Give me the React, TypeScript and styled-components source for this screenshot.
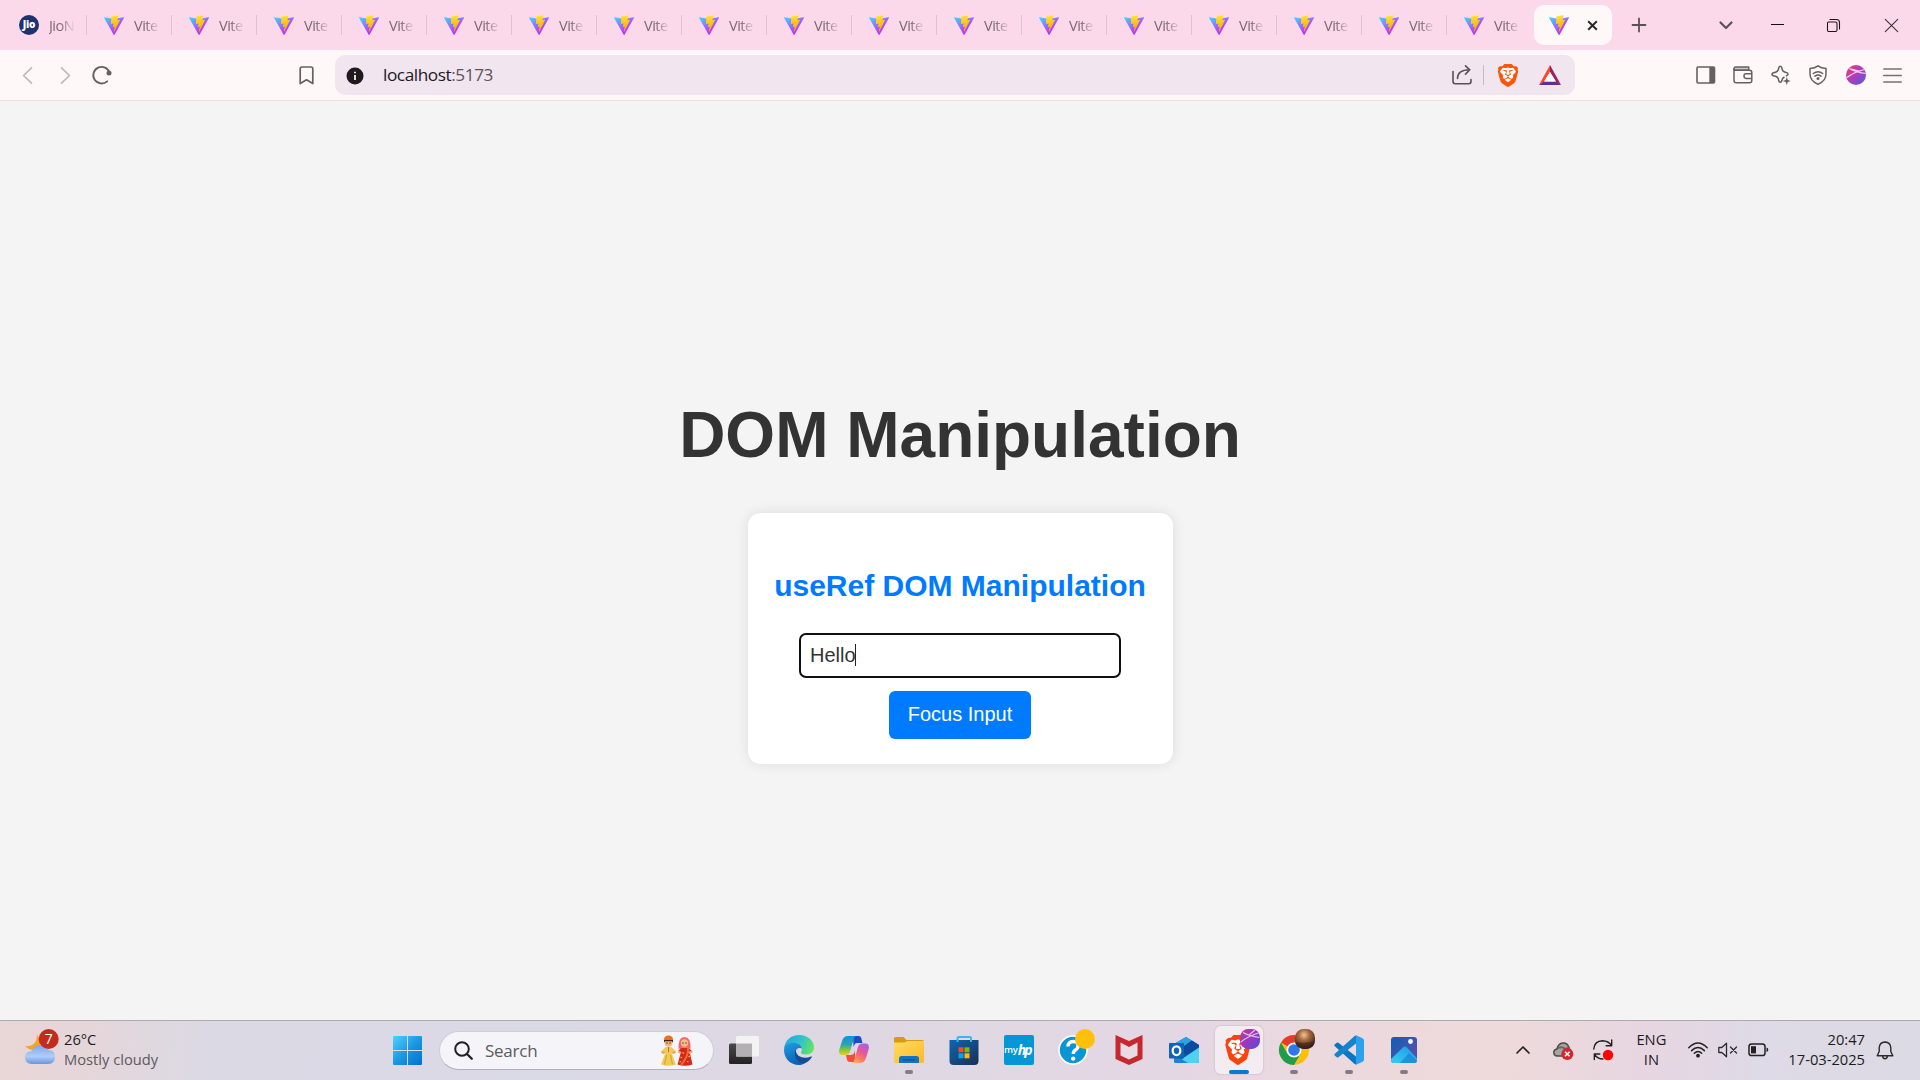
import React from "react";
import styled, { createGlobalStyle, css } from "styled-components";
import { SiBrave } from "react-icons/si";

const UI_FONT = '"Open Sans", "Noto Sans", sans-serif';
const PAGE_FONT = '"Liberation Sans", Arial, sans-serif';

const GlobalStyle = createGlobalStyle`
  * { box-sizing: border-box; }
  body { margin: 0; background: #f4f4f4; overflow: hidden; }
  svg { display: block; flex: none; overflow: visible; }
`;

const Screen = styled.div`
  width: 1920px;
  height: 1080px;
  display: flex;
  flex-direction: column;
  font-family: ${UI_FONT};
`;

/* ---------- Tab strip ---------- */

const TabStrip = styled.div`
  height: 50px;
  flex: none;
  display: flex;
  align-items: center;
  background: #fbd9ea;
  padding-left: 2px;
`;

const Tab = styled.div<{ $divider?: boolean }>`
  width: 85px;
  height: 20px;
  flex: none;
  display: flex;
  align-items: center;
  padding-left: 17px;
  border-right: 1px solid ${(p) => (p.$divider ? "#dcc3d1" : "transparent")};
`;

const TabTitle = styled.span`
  width: 25px;
  margin-left: 10px;
  white-space: nowrap;
  font-size: 14.6px;
  line-height: 20px;
  letter-spacing: -0.55px;
  color: #7b6974;
  -webkit-mask-image: linear-gradient(90deg, #000 45%, transparent 105%);
  mask-image: linear-gradient(90deg, #000 45%, transparent 105%);
`;

const ActiveTab = styled.div`
  width: 78px;
  height: 40px;
  margin-left: 2px;
  padding: 0 14px 0 15px;
  display: flex;
  align-items: center;
  justify-content: space-between;
  border-radius: 10px;
  background: #fff8f8;
`;

const StripButton = styled.div<{ $gap: number }>`
  margin-left: ${(p) => p.$gap}px;
`;

/* ---------- Toolbar ---------- */

const Toolbar = styled.div`
  height: 51px;
  flex: none;
  display: flex;
  align-items: center;
  background: #fff8f8;
  border-bottom: 1px solid #f2dce3;
`;

const NavButtons = styled.div`
  width: 335px;
  display: flex;
  align-items: center;
  padding-left: 22px;
`;

const NavButton = styled.div<{ $gap: number }>`
  margin-left: ${(p) => p.$gap}px;
`;

const BookmarkSlot = styled.div`
  margin-left: auto;
  padding-right: 21px;
`;

const AddressBar = styled.div`
  width: 1240px;
  height: 40px;
  display: flex;
  align-items: center;
  padding: 0 14px 0 11px;
  border-radius: 10px;
  background: #f1e5ef;
`;

const SiteInfo = styled.div`
  margin-top: 2px;
`;

const Url = styled.span`
  margin-left: 19px;
  flex: 1;
  font-size: 17.2px;
  line-height: 24px;
  letter-spacing: -0.42px;
  color: #201a1d;
  em { font-style: normal; color: #5d5259; }
`;

const AddressDivider = styled.span`
  width: 1px;
  height: 20px;
  margin: 0 14px 0 11px;
  background: #c5bcc8;
`;

const RewardsSlot = styled.div`
  margin-left: 21px;
`;

const Extensions = styled.div`
  display: flex;
  align-items: center;
  gap: 17.4px;
  margin-left: auto;
  padding-right: 18px;
`;

/* ---------- Page ---------- */

const Page = styled.main`
  flex: 1;
  display: flex;
  flex-direction: column;
  align-items: center;
  padding-top: 297px;
  background: #f4f4f4;
  font-family: ${PAGE_FONT};
`;

const Title = styled.h1`
  margin: 0 0 41px;
  font-size: 64px;
  line-height: 74px;
  color: #333;
`;

const Card = styled.section`
  width: 425px;
  height: 251px;
  display: flex;
  flex-direction: column;
  align-items: center;
  padding-top: 56px;
  border-radius: 12.5px;
  background: #fff;
  box-shadow: 0 0 13px rgba(0, 0, 0, 0.1);
`;

const CardTitle = styled.h2`
  margin: 0 0 30px;
  font-size: 30px;
  line-height: 34px;
  white-space: nowrap;
  color: #007bff;
`;

const Field = styled.div`
  width: 322px;
  height: 45px;
  display: flex;
  align-items: center;
  padding: 0 0 1px 9px;
  border: 2px solid #101010;
  border-radius: 7px;
  font-size: 20px;
  color: #333;
`;

const Caret = styled.span`
  width: 1px;
  height: 22px;
  margin-left: -1px;
  background: #222;
`;

const FocusButton = styled.button`
  width: 142px;
  height: 48px;
  margin-top: 13px;
  padding: 0 0 2px;
  border: 0;
  border-radius: 6px;
  background: #007bff;
  color: #fff;
  font: 20px ${PAGE_FONT};
`;

/* ---------- Taskbar ---------- */

const Taskbar = styled.footer`
  height: 60px;
  flex: none;
  display: flex;
  align-items: center;
  padding-bottom: 1px;
  border-top: 1px solid #aeabae;
  background: linear-gradient(
    95deg,
    #e9d6d6 0, #e5d6da 90px, #dbd9e4 210px, #dad9e6 560px, #ddd8e3 720px, #e0d8e3 980px,
    #e4d7e4 1180px, #ecd9de 1320px, #eedada 1500px, #e7d6e1 1640px, #dedae7 1760px, #dcdae3 1920px
  );
`;

const Weather = styled.div`
  width: 393px;
  display: flex;
  align-items: center;
  padding-left: 24px;
`;

const WeatherArt = styled.div`
  padding-bottom: 3px;
`;

const Lines = styled.div<{ $align?: string }>`
  display: flex;
  flex-direction: column;
  padding-bottom: 3px;
  text-align: ${(p) => p.$align ?? "left"};
  white-space: nowrap;
  font-size: 14.7px;
  line-height: 20px;
  color: #1c1c1e;
`;

const Muted = styled.span`
  color: #5d5960;
`;

const WeatherText = styled(Lines)`
  margin-left: 8px;
`;

const SearchBox = styled.div`
  width: 275px;
  height: 39px;
  margin: 0 2px 0 17px;
  display: flex;
  align-items: center;
  padding: 0 20px 0 14px;
  border: 1px solid #cfccd8;
  border-bottom-color: #b3b0bc;
  border-radius: 20px;
  background: #f5f4f9;
  font-size: 17px;
  letter-spacing: -0.25px;
  color: #5c5b60;
`;

const SearchLabel = styled.span`
  flex: 1;
  margin-left: 12px;
`;

const AppSlot = styled.div`
  width: 55px;
  height: 48px;
  display: flex;
  justify-content: center;
`;

const AppTile = styled.div<{ $active?: boolean; $running?: boolean }>`
  width: 48px;
  height: 48px;
  display: flex;
  flex-direction: column;
  align-items: center;
  padding-top: 9px;
  border-radius: 6px;
  ${(p) =>
    p.$active &&
    css`
      background: #f3edf2;
      box-shadow: 0 0 1px 1px rgba(180, 160, 175, 0.25);
    `}
  &::after {
    content: "";
    display: ${(p) => (p.$running || p.$active ? "block" : "none")};
    width: ${(p) => (p.$active ? 20 : 8)}px;
    height: 4px;
    margin-top: 5px;
    border-radius: 2px;
    background: ${(p) => (p.$active ? "#0a78d4" : "#857b82")};
  }
`;

const Tray = styled.div`
  margin-left: auto;
  display: flex;
  align-items: center;
  padding-right: 26px;
`;

const TraySlot = styled.div<{ $gap: number }>`
  margin-left: ${(p) => p.$gap}px;
`;

/* ---------- Icons ---------- */

const line = (color: string, w = 1.6) => ({
  fill: "none",
  stroke: color,
  strokeWidth: w,
  strokeLinecap: "round" as const,
  strokeLinejoin: "round" as const,
});

const GradientDefs = styled.svg`
  position: absolute;
`;

const SharedGradients = () => (
  <GradientDefs width="0" height="0">
    <defs>
      <linearGradient id="viteBody" x1="-.8%" x2="57.6%" y1="7.6%" y2="78.4%">
        <stop offset="0" stopColor="#41D1FF" /><stop offset="1" stopColor="#BD34FE" />
      </linearGradient>
      <linearGradient id="viteBolt" x1="43.4%" x2="50.3%" y1="2.2%" y2="89%">
        <stop offset="0" stopColor="#FFEA83" /><stop offset=".083" stopColor="#FFDD35" /><stop offset="1" stopColor="#FFA800" />
      </linearGradient>
      <linearGradient id="orb" x1="0" y1="0" x2="1" y2="1">
        <stop offset="0" stopColor="#f0416b" /><stop offset=".45" stopColor="#b63bb5" /><stop offset="1" stopColor="#4e5be6" />
      </linearGradient>
    </defs>
  </GradientDefs>
);

const ViteLogo = () => (
  <svg width="20" height="20" viewBox="0 0 256 257">
    <path fill="url(#viteBody)" d="M255.153 37.938L134.897 252.976c-2.483 4.44-8.862 4.466-11.382.048L.875 37.958c-2.746-4.814 1.371-10.646 6.827-9.67l120.385 21.517a6.537 6.537 0 0 0 2.322-.004l117.867-21.483c5.438-.991 9.574 4.796 6.877 9.62Z" />
    <path fill="url(#viteBolt)" d="M185.432.063L96.44 17.501a3.268 3.268 0 0 0-2.634 3.014l-5.474 92.456a3.268 3.268 0 0 0 3.997 3.378l24.777-5.718c2.318-.535 4.413 1.507 3.936 3.838l-7.361 36.047c-.495 2.426 1.782 4.5 4.151 3.78l15.304-4.649c2.372-.72 4.652 1.36 4.15 3.788l-11.698 56.621c-.732 3.542 3.979 5.473 5.943 2.437l1.313-2.028l72.516-144.72c1.215-2.423-.88-5.186-3.54-4.672l-25.505 4.922c-2.396.462-4.435-1.77-3.759-4.114l16.646-57.705c.677-2.35-1.37-4.583-3.769-4.113Z" />
  </svg>
);

const JioBadge = styled.span`
  width: 20px;
  height: 20px;
  flex: none;
  border-radius: 50%;
  background: #21306f;
  color: #fff;
  font: 800 10px/19px "Open Sans", sans-serif;
  letter-spacing: -0.2px;
  text-align: center;
`;

const Orb = ({ size }: { size: number }) => (
  <svg width={size} height={size} viewBox="0 0 20 20">
    <circle cx="10" cy="10" r="10" fill="url(#orb)" />
    <path d="M1 12.500Q8 7 18.500 4.500M3.500 3.500Q9 7 19.500 8.500M5 4L13 6" fill="none" stroke="#fbd3ee" strokeWidth="1.200" />
  </svg>
);

const BraveLogo = ({ w, h, color }: { w: number; h: number; color: string }) => (
  <svg width={w} height={h} viewBox="2 0 20 24" preserveAspectRatio="none">
    <path d="M6 4h12l2 4-3 10-5 4-5-4L4 8Z" fill="#fff" />
    <SiBrave x={0} y={0} size={24} color={color} />
  </svg>
);

const EdgeIcon = () => (
  <svg width="30" height="30" viewBox="0 0 30 30">
    <defs>
      <linearGradient id="edgeTop" x1="0" y1=".3" x2="1" y2=".6">
        <stop offset="0" stopColor="#2aa5e0" /><stop offset=".5" stopColor="#2fc2cf" /><stop offset="1" stopColor="#66e35c" />
      </linearGradient>
      <linearGradient id="edgeMid" x1="0" y1="0" x2=".4" y2="1">
        <stop offset="0" stopColor="#1fa0e0" /><stop offset="1" stopColor="#0a5fb8" />
      </linearGradient>
    </defs>
    <path d="M0 14C1 5 7 0 15 0c9 0 15 6 15 12.5 0 4-3 7-7.500 7-4 0-5.500-1-5.500-2.300 0-.8 1-1 1-3.200C18 10.500 14 8 10 8 5 8 1 11 0 14Z" fill="url(#edgeTop)" />
    <path d="M0 15C0 10 4.500 7.800 9.500 7.800c4.500 0 8.500 2.700 8.500 6.200-1-1.500-6-2-6.500 3C11.500 23 16 27.500 21 28 19 29.400 17 30 15 30 6.500 30 0 23.500 0 15Z" fill="url(#edgeMid)" />
    <path d="M11.800 14.500C9 19 12 28.500 20.500 28.300c3.300-1.300 5.800-3.600 7.300-6.100.3-.6-.2-1-.8-.7C20.500 24.500 11.500 22 11.800 14.500Z" fill="#124c94" />
  </svg>
);

const CopilotIcon = () => (
  <svg width="30" height="30" viewBox="0 0 30 30">
    <defs>
      <linearGradient id="copA" x1=".2" y1="0" x2=".2" y2="1">
        <stop offset="0" stopColor="#128fe8" /><stop offset=".45" stopColor="#2ba6a8" /><stop offset=".75" stopColor="#8dc63c" /><stop offset="1" stopColor="#f2cd1c" />
      </linearGradient>
      <linearGradient id="copB" x1=".8" y1="0" x2=".3" y2="1">
        <stop offset="0" stopColor="#a563e6" /><stop offset=".4" stopColor="#e5559c" /><stop offset=".75" stopColor="#fa7a62" /><stop offset="1" stopColor="#ffad5c" />
      </linearGradient>
    </defs>
    <path d="M14 1h5.500c1.500 0 2.300.8 2.800 2.300L23.500 8H18c-2 0-2.500 1.500-3.500 4Z" fill="#1a4fc4" />
    <path d="M16 27H11c-1.800 0-2.700-1-3.200-2.800L7 20h5c2 0 3-1.500 4-4Z" fill="#f04f3a" />
    <path d="M9 1h9c-2 0-2.700 1-3.300 3l-3.500 12c-.8 2.500-2 4-5 4H3.500C.5 20-.5 17.500.3 14.500L3 6C4.200 2.500 6 1 9 1Z" fill="url(#copA)" />
    <path d="M21 28H12c2 0 2.700-1 3.300-3l3.500-12.500c.8-2.500 2-4 5-4h2.700c3 0 4 2.500 3.200 5.500L27 23c-1.200 3.500-3 5-6 5Z" fill="url(#copB)" />
  </svg>
);

const FolderIcon = () => (
  <svg width="30" height="30" viewBox="0 0 30 30">
    <defs>
      <linearGradient id="fold" x1="0" y1="0" x2="1" y2="1"><stop offset="0" stopColor="#ffdc65" /><stop offset="1" stopColor="#fbb825" /></linearGradient>
    </defs>
    <path d="M0 3.500Q0 2 1.500 2H9.500l3 3H28.500Q30 5 30 6.500V10H0Z" fill="#d99a10" />
    <path d="M0 7.500H10.500L13 6H30V26.500Q30 28 28.500 28H1.500Q0 28 0 26.500Z" fill="url(#fold)" />
    <path d="M5 28V23.500Q5 21 7.500 21h15q2.500 0 2.500 2.500V28Z" fill="#1273c4" />
    <path d="M9 25h12" stroke="#0c4d92" strokeWidth="1.200" />
  </svg>
);

const StoreIcon = () => (
  <svg width="30" height="30" viewBox="0 0 30 30">
    <defs>
      <linearGradient id="store" x1="0" y1="0" x2="1" y2="1"><stop offset="0" stopColor="#0e66b3" /><stop offset="1" stopColor="#1a2e52" /></linearGradient>
    </defs>
    <path d="M.5 5h29V26q0 4-4 4h-21q-4 0-4-4Z" fill="url(#store)" />
    <path d="M8.500 7V3.500Q8.500 2 10 2H20.500Q22 2 22 3.500V7" fill="none" stroke="#3cb6ea" strokeWidth="2" />
    <path d="M9.500 12.300h5v5h-5Z" fill="#f25022" /><path d="M15.500 12.300h5v5h-5Z" fill="#7fba00" />
    <path d="M9.500 18.300h5v5h-5Z" fill="#00a4ef" /><path d="M15.500 18.300h5v5h-5Z" fill="#ffb900" />
  </svg>
);

const MyHp = styled.span`
  width: 30px;
  height: 30px;
  flex: none;
  display: flex;
  align-items: center;
  justify-content: center;
  border-radius: 2px;
  background: #0497d8;
  color: #fff;
  font: 600 9.5px/30px "Open Sans", sans-serif;
  letter-spacing: -0.3px;
  i { font: italic 700 14px/28px "Liberation Sans Narrow", "Open Sans", sans-serif; letter-spacing: -1.8px; padding-right: 2px; }
`;

const HelpIcon = () => (
  <svg width="30" height="30" viewBox="0 0 30 30">
    <circle cx="14" cy="15" r="14" fill="#0a96d5" stroke="#fff" strokeWidth="1.600" />
    <path d="M9 11.500Q9 6.500 14.300 6.500T19 11Q19 13.500 16.500 15 14.300 16.400 14.300 19" fill="none" stroke="#fff" strokeWidth="3.400" />
    <circle cx="14.200" cy="23.600" r="2.200" fill="#fff" />
    <circle cx="26" cy="4" r="10" fill="#ffc00c" />
  </svg>
);

const McAfeeIcon = () => (
  <svg width="30" height="30" viewBox="0 0 30 30">
    <path d="M1.500 0L15 6 28.500 0V24L15 30 1.500 24Z" fill="#c5282d" />
    <path d="M6.500 7.500L15 12l8.500-4.500V20.500L15 24.500l-8.500-4Z" fill="#e8dbe4" />
  </svg>
);

const OutlookIcon = () => (
  <svg width="30" height="30" viewBox="0 0 30 30">
    <path d="M5 9L17 2l13 8V26q0 2-2 2H7q-2 0-2-2Z" fill="#0d58a8" />
    <path d="M5 9L17 2l6 3.500L11 14H5Z" fill="#2ba4e6" />
    <path d="M23 5.500L30 10v3L17 20l-6-6Z" fill="#0b4b9e" />
    <path d="M30 12.500V26q0 2-2 2H7Z" fill="#4cd3f4" />
    <path d="M5 22v4q0 2 2 2h12L9 22Z" fill="#1d83d4" />
    <rect x="0" y="8" width="15" height="15.500" rx="1" fill="#0f63b8" />
    <ellipse cx="7.500" cy="15.700" rx="3.800" ry="4.400" fill="none" stroke="#fff" strokeWidth="2.300" />
  </svg>
);

const BraveTask = () => (
  <svg width="30" height="30" viewBox="0 0 30 30">
    <path d="M7 5h13l4 5-3 13-7 6-8-6L3 10Z" fill="#fff" />
    <SiBrave x={-1} y={0} size={30} color="#fb4310" />
    <g transform="translate(16 -6)">
      <rect width="20" height="20" rx="8.500" fill="url(#orb)" />
      <rect width="20" height="20" rx="8.500" fill="#6c35c8" opacity=".35" />
      <path d="M1 13Q8 7 18.500 4M3 3.500Q9 7 19.500 8.500M9 6L15 1" fill="none" stroke="#e6bdf0" strokeWidth="1.200" />
    </g>
  </svg>
);

const ChromeIcon = () => (
  <svg width="30" height="30" viewBox="0 0 30 30">
    <defs>
      <radialGradient id="photo" cx=".45" cy=".3" r=".8"><stop offset="0" stopColor="#f2c49a" /><stop offset=".35" stopColor="#a5683c" /><stop offset="1" stopColor="#1c1210" /></radialGradient>
    </defs>
    <circle cx="15" cy="15" r="15" fill="#fbbf12" />
    <path d="M15 15L2 7.500A15 15 0 0 1 28 7.500H15Z" fill="#e33b2e" />
    <path d="M2 7.500A15 15 0 0 0 15 30L21.500 18.800 15 15 8.500 18.800Z" fill="#1f9d4c" />
    <circle cx="15" cy="15" r="7.500" fill="#fff" />
    <circle cx="15" cy="15" r="5.800" fill="#2f78e8" />
    <rect x="16" y="-6" width="20" height="20" rx="8.500" fill="url(#photo)" />
    <path d="M16.500 7Q26 9 35.500 6v2q-2 6-9 6t-10-6Z" fill="#2d1a15" opacity=".5" />
  </svg>
);

const VsCodeIcon = () => (
  <svg width="30" height="30" viewBox="0 0 30 30">
    <path d="M.600 9.500L2.800 7.700q.8-.6 1.600 0L22 21.500V29.500Q21 29.600 20.300 28.800L.600 11Q-.2 10.300.600 9.500Z" fill="#0878c0" />
    <path d="M.600 20.500L2.800 22.300q.8.600 1.600 0L22 8.500V.500Q21 .400 20.300 1.200L.600 19Q-.2 19.700.600 20.500Z" fill="#1684cc" />
    <path d="M22 .300L28.500 3.200Q30 4 30 5.500V24.500Q30 26 28.500 26.800L22 29.700Z" fill="#2ba1ef" />
  </svg>
);

const PhotosIcon = () => (
  <svg width="30" height="30" viewBox="0 0 30 30">
    <defs>
      <linearGradient id="phBg" x1="0" y1="0" x2="1" y2="1"><stop offset="0" stopColor="#0d5fb5" /><stop offset="1" stopColor="#6a4bab" /></linearGradient>
      <linearGradient id="phHill" x1="0" y1="1" x2="1" y2="0"><stop offset="0" stopColor="#3bd3f7" /><stop offset="1" stopColor="#1b93e3" /></linearGradient>
      <clipPath id="phClip"><rect x="2" y="2" width="26" height="26" rx="3" /></clipPath>
    </defs>
    <g clipPath="url(#phClip)">
      <rect x="2" y="2" width="26" height="26" fill="url(#phBg)" />
      <path d="M0 26L14 12.500q2-2 4 0L32 28v2H0Z" fill="url(#phHill)" />
      <path d="M9 30L20 18 32 30Z" fill="#1579cf" opacity=".6" />
    </g>
    <circle cx="21.500" cy="6.500" r="2.400" fill="#fff" />
  </svg>
);

const TaskViewIcon = () => (
  <svg width="30" height="30" viewBox="0 0 30 30">
    <defs>
      <linearGradient id="tvDark" x1="0" y1="0" x2="0" y2="1"><stop offset="0" stopColor="#4a4a4a" /><stop offset="1" stopColor="#222" /></linearGradient>
    </defs>
    <rect x="0" y="8.500" width="23" height="20.500" rx="1.500" fill="url(#tvDark)" />
    <rect x="7" y="1" width="23" height="20.500" rx="1.500" fill="#f4f3f4" />
    <rect x="7" y="8.500" width="16" height="13" fill="#b3b1b3" />
  </svg>
);

const CoupleArt = () => (
  <svg width="32" height="31" viewBox="0 0 32 31">
    <path d="M4 12.500Q7.500 10.500 11 12.500l4 4-2.500 2.500-2-1 4.500 11.500q-7.500 2.500-15 0L4.500 18 2.500 19 0 16.500Z" fill="#f0ca55" />
    <path d="M5.500 20L3.500 29.500M9.500 20l2 9.500" stroke="#d3a233" strokeWidth="1.100" />
    <path d="M7.500 12v5" stroke="#d9643a" strokeWidth="1" />
    <path d="M.5 17l3 1M14.500 17l-3 1" stroke="#ef9f66" strokeWidth="2" />
    <circle cx="7.500" cy="7.500" r="4" fill="#f2b47e" />
    <path d="M3 5Q3 .5 7.500.500T12 5Z" fill="#e9701c" />
    <path d="M3 5H12v2.500L10.800 6.200H4.200L3 7.500Z" fill="#4a2116" />
    <path d="M20 12.500h7l4.500 4-2.500 2 2.500 11q-7.500 2.500-15 0l3-11-2.500-2Z" fill="#d3271f" />
    <path d="M17.500 14Q17 2 23.500 2T29.500 14l-3.500-1.500h-5Z" fill="#f2666b" />
    <path d="M27 13Q28 21 20 30" stroke="#ee6b2d" strokeWidth="2.200" fill="none" />
    <circle cx="23.500" cy="8" r="3.700" fill="#f6bd8b" />
    <path d="M17 16.500l3 1.500M31 16.500l-3 1.500" stroke="#f0ad75" strokeWidth="2" fill="none" />
    <path d="M19.500 22l1.500.8M27.500 22l1.500-1M26 26.500l1.500.500M21.500 17.500l1.500 1M18.500 27l1.500-.5" stroke="#f6b93a" strokeWidth="1.300" />
    <circle cx="6" cy="8" r=".7" fill="#432" /><circle cx="9" cy="8" r=".7" fill="#432" />
    <circle cx="22" cy="8" r=".7" fill="#432" /><circle cx="25" cy="8" r=".7" fill="#432" />
  </svg>
);

const WeatherIcon = () => (
  <svg width="32" height="36" viewBox="0 0 32 36">
    <defs>
      <linearGradient id="cloud" x1="0" y1="0" x2="0" y2="1"><stop offset="0" stopColor="#7fa6ea" /><stop offset=".6" stopColor="#b0ccf8" /><stop offset="1" stopColor="#6c93df" /></linearGradient>
    </defs>
    <g transform="translate(0 -1)">
      <path d="M13 5Q20 12 14 18 8 23 1 16 9 17 12 11 13 8 13 5Z" fill="#f4a324" />
      <path d="M8 34Q1 34 1 27.500T8 21Q10 15 16.500 15T24.500 20Q31 20 31 27T24 34Z" fill="url(#cloud)" />
      <circle cx="24.700" cy="9" r="10" fill="#c42b1c" />
      <text x="24.700" y="14" fill="#fff" fontFamily="Open Sans, sans-serif" fontSize="14" textAnchor="middle">7</text>
    </g>
  </svg>
);

const WindowsIcon = () => (
  <svg width="29" height="29" viewBox="0 0 29 29">
    <defs>
      <linearGradient id="win" gradientUnits="userSpaceOnUse" x1="0" y1="0" x2="29" y2="29"><stop offset="0" stopColor="#4fd2ff" /><stop offset=".5" stopColor="#1a98e3" /><stop offset="1" stopColor="#0370cf" /></linearGradient>
    </defs>
    <path fill="url(#win)" d="M1 0H14V14H0V1Q0 0 1 0ZM15 0H28Q29 0 29 1V14H15ZM0 15H14V29H1Q0 29 0 28ZM15 15H29V28Q29 29 28 29H15Z" />
  </svg>
);

const ICON = "#666064";

export default function App() {
  return (
    <Screen>
      <GlobalStyle />
      <SharedGradients />

      <TabStrip>
        <Tab $divider>
          <JioBadge>Jio</JioBadge>
          <TabTitle>JioN</TabTitle>
        </Tab>
        {Array.from({ length: 17 }, (_, i) => (
          <Tab key={i} $divider={i < 16}>
            <ViteLogo />
            <TabTitle>Vite</TabTitle>
          </Tab>
        ))}
        <ActiveTab>
          <ViteLogo />
          <svg width="11" height="11" viewBox="0 0 11 11"><path d="M1.200 1.200l8.600 8.600M9.800 1.200L1.200 9.800" {...line("#2b2528", 2)} strokeLinecap="butt" /></svg>
        </ActiveTab>
        <StripButton $gap={20}>
          <svg width="14" height="14" viewBox="0 0 14 14"><path d="M7 .5v13M.5 7h13" {...line("#5c5057", 1.8)} /></svg>
        </StripButton>
        <StripButton $gap={73}>
          <svg width="14" height="9" viewBox="0 0 14 9"><path d="M1.500 1.500L7 7l5.500-5.500" {...line("#5c5057", 2.2)} /></svg>
        </StripButton>
        <StripButton $gap={38}>
          <svg width="13" height="13" viewBox="0 0 13 13"><path d="M0 5.500h13" stroke="#111" /></svg>
        </StripButton>
        <StripButton $gap={43}>
          <svg width="13" height="13" viewBox="0 0 13 13"><path d="M1.500 3h7Q10 3 10 4.500v6.500Q10 12.500 8.500 12.500h-7Q.500 12.500.500 11V4Q.500 3 1.500 3ZM3 .5h6.500Q12.500.500 12.500 3.500V10" {...line("#1d171a", 1.1)} /></svg>
        </StripButton>
        <StripButton $gap={45}>
          <svg width="13" height="13" viewBox="0 0 13 13"><path d="M.3.300l12.400 12.400M12.700.300L.3 12.700" {...line("#3a3236", 1.1)} /></svg>
        </StripButton>
      </TabStrip>

      <Toolbar>
        <NavButtons>
          <svg width="11" height="17" viewBox="0 0 11 17"><path d="M9.500.800L1.500 8.500l8 7.700" {...line("#bdb7b9", 1.6)} /></svg>
          <NavButton $gap={27}>
            <svg width="11" height="17" viewBox="0 0 11 17"><path d="M1.500.800l8 7.700-8 7.700" {...line("#bdb7b9", 1.6)} /></svg>
          </NavButton>
          <NavButton $gap={21}>
            <svg width="20" height="20" viewBox="0 0 20 20">
              <path d="M15.200 16.300A8.300 8.300 0 1 1 17.600 8" {...line(ICON, 1.8)} />
              <circle cx="17" cy="8" r="2.500" fill={ICON} />
            </svg>
          </NavButton>
          <BookmarkSlot>
            <svg width="15" height="19" viewBox="0 0 15 19"><path d="M3 1h9Q13.800 1 13.800 2.800V17.600L7.500 13.800 1.200 17.600V2.800Q1.200 1 3 1Z" {...line(ICON, 1.7)} /></svg>
          </BookmarkSlot>
        </NavButtons>
        <AddressBar>
          <SiteInfo>
            <svg width="18" height="18" viewBox="0 0 18 18">
              <circle cx="9" cy="9" r="8.500" fill="#201a1c" />
              <path d="M9 8v5M9 4.700v1.600" stroke="#fff" strokeWidth="1.700" />
            </svg>
          </SiteInfo>
          <Url>localhost<em>:5173</em></Url>
          <svg width="20" height="20" viewBox="0 0 20 20"><path d="M1 6.500V16.500Q1 18.700 3.200 18.700H16.800Q19 18.700 19 16.500V14.500M5.500 13.500Q5.500 5 17.500 4.800M13.500.800l4.300 4-4.300 4.300" {...line("#5a5058", 1.6)} /></svg>
          <AddressDivider />
          <BraveLogo w={20} h={23} color="#fb5607" />
          <RewardsSlot>
            <svg width="22" height="20" viewBox="0 0 22 20">
              <path d="M11 0L0 20l5-3 6-10Z" fill="#ff4724" />
              <path d="M11 0l11 20-5-3-6-10Z" fill="#9e1f63" />
              <path d="M0 20l5-3.500h12L22 20Z" fill="#662d91" />
              <path d="M11 7l6 9.500H5Z" fill="#fff" />
            </svg>
          </RewardsSlot>
        </AddressBar>
        <Extensions>
          <svg width="20" height="18" viewBox="0 0 20 18"><rect x="1" y="1" width="17.500" height="16" rx="1" {...line(ICON, 1.6)} /><path d="M13.300 1h5.400v16h-5.400Z" fill={ICON} /></svg>
          <svg width="20" height="18" viewBox="0 0 20 18"><path d="M2.500 1h13.300v3.200H1V2.500Q1 1 2.500 1Z" {...line(ICON, 1.4)} fill="#c9c4c7" /><path d="M1 3V14.500Q1 16.800 3.300 16.800H16.500Q18.800 16.800 18.800 14.500V6.500Q18.800 4.200 16.500 4.200H1M18.800 7.800H13Q11 7.800 11 10T13 12.400h5.800" {...line(ICON, 1.5)} /></svg>
          <svg width="20" height="20" viewBox="0 0 20 20"><path d="M13 12.300Q11.300 13 10.900 15.500 10.500 17.300 9.300 17.300T7.700 15.500Q7.200 11.700 3.500 11.100 1 10.700 1 9.300T3.500 7.500Q7.200 7 7.700 3.200 8 1.200 9.300 1.200T10.900 3.200Q11.400 7 15.200 7.500 17 7.800 17 9.300 17 10.300 15.500 10.800" {...line(ICON, 1.5)} /><path d="M15.800 12l1 2.900 2.900 1.100-2.900 1.100-1 2.900-1.100-2.900-2.900-1.100 2.900-1.100Z" fill={ICON} /></svg>
          <svg width="20" height="20" viewBox="0 0 20 20"><path d="M10 .8Q13 3.200 18 3.500V9Q18 16 10 19.200 2 16 2 9V3.500Q7 3.200 10 .8Z" {...line(ICON, 1.5)} /><path d="M5.300 8.500Q10 4.800 14.700 8.500M7 11.200Q10 8.800 13 11.200" {...line(ICON, 1.5)} /><circle cx="10" cy="13.500" r="1.500" fill={ICON} /></svg>
          <Orb size={20} />
          <svg width="19" height="18" viewBox="0 0 19 18"><path d="M.8 3h17.400M.8 9.500h17.400M.8 16h17.400" {...line("#777174", 1.6)} /></svg>
        </Extensions>
      </Toolbar>

      <Page>
        <Title>DOM Manipulation</Title>
        <Card>
          <CardTitle>useRef DOM Manipulation</CardTitle>
          <Field>
            Hello<Caret />
          </Field>
          <FocusButton>Focus Input</FocusButton>
        </Card>
      </Page>

      <Taskbar>
        <Weather>
          <WeatherArt><WeatherIcon /></WeatherArt>
          <WeatherText>
            <span>26°C</span>
            <Muted>Mostly cloudy</Muted>
          </WeatherText>
        </Weather>
        <WindowsIcon />
        <SearchBox>
          <svg width="19" height="19" viewBox="0 0 19 19"><circle cx="8" cy="8" r="6.800" {...line("#222", 2)} /><path d="M13 13l4.800 4.800" {...line("#222", 2.3)} /></svg>
          <SearchLabel>Search</SearchLabel>
          <CoupleArt />
        </SearchBox>
        <AppSlot><AppTile><TaskViewIcon /></AppTile></AppSlot>
        <AppSlot><AppTile><EdgeIcon /></AppTile></AppSlot>
        <AppSlot><AppTile><CopilotIcon /></AppTile></AppSlot>
        <AppSlot><AppTile $running><FolderIcon /></AppTile></AppSlot>
        <AppSlot><AppTile><StoreIcon /></AppTile></AppSlot>
        <AppSlot><AppTile><MyHp>my<i>hp</i></MyHp></AppTile></AppSlot>
        <AppSlot><AppTile><HelpIcon /></AppTile></AppSlot>
        <AppSlot><AppTile><McAfeeIcon /></AppTile></AppSlot>
        <AppSlot><AppTile><OutlookIcon /></AppTile></AppSlot>
        <AppSlot><AppTile $active><BraveTask /></AppTile></AppSlot>
        <AppSlot><AppTile $running><ChromeIcon /></AppTile></AppSlot>
        <AppSlot><AppTile $running><VsCodeIcon /></AppTile></AppSlot>
        <AppSlot><AppTile $running><PhotosIcon /></AppTile></AppSlot>
        <Tray>
          <svg width="14" height="8" viewBox="0 0 14 8"><path d="M1 7l6-6 6 6" {...line("#222", 1.7)} /></svg>
          <TraySlot $gap={23}>
            <svg width="20" height="20" viewBox="0 0 20 20">
              <path d="M4.500 16Q.8 16 .8 12.300 1 9.500 4 9 5 3.500 10 3q4-.3 5.500 3.500L17 10l-6 6Z" fill="#a5a5a5" stroke="#4a4a4a" strokeWidth="1.500" />
              <path d="M5 8Q9 6 12 9l5-1.500" stroke="#666" strokeWidth="2" fill="none" />
              <circle cx="14.300" cy="14" r="6" fill="#d6242e" /><path d="M12 11.700l4.600 4.600M16.600 11.700L12 16.300" stroke="#fff" strokeWidth="1.600" />
            </svg>
          </TraySlot>
          <TraySlot $gap={20}>
            <svg width="20" height="20" viewBox="0 0 20 20"><path d="M.8 9Q1.500 1 9.500.800 15.500 1 18.500 5.500M18.700 0v5.800h-5.500M1.300 19.500v-5.500h5.500M1.500 14.500Q4.500 19 10 19" {...line("#222", 1.4)} /><circle cx="15" cy="15" r="5.200" fill="#fa0505" /></svg>
          </TraySlot>
          <TraySlot $gap={23}>
            <Lines $align="center"><span>ENG</span><span>IN</span></Lines>
          </TraySlot>
          <TraySlot $gap={22}>
            <svg width="20" height="16" viewBox="0 0 20 16"><path d="M.8 5.800Q10-3.800 19.200 5.800M3.600 8.600Q10 2.200 16.400 8.600M6.300 11.300Q10 7.800 13.700 11.300" {...line("#222", 1.5)} /><circle cx="10" cy="13.700" r="1.900" fill="#222" /></svg>
          </TraySlot>
          <TraySlot $gap={10}>
            <svg width="20" height="16" viewBox="0 0 20 16"><path d="M.8 5.500H3.800L8.500 1.200V14.800L3.800 10.500H.8ZM12.500 5l6 6M18.500 5l-6 6" {...line("#2b2b2b", 1.3)} /></svg>
          </TraySlot>
          <TraySlot $gap={10}>
            <svg width="21" height="14" viewBox="0 0 21 14"><rect x="1" y="1" width="16" height="11.500" rx="2.600" {...line("#222", 1.5)} /><path d="M3 3.200h5v7.200H3Z" fill="#222" /><path d="M18.500 4.500q1.800.300 1.800 2.200t-1.800 2.200Z" fill="#222" /></svg>
          </TraySlot>
          <TraySlot $gap={19}>
            <Lines $align="right"><span>20:47</span><span>17-03-2025</span></Lines>
          </TraySlot>
          <TraySlot $gap={11}>
            <svg width="18" height="19" viewBox="0 0 18 19"><path d="M9 1Q14.500 1.200 14.800 7V10.500L16.800 14.800H1.200L3.200 10.500V7Q3.500 1.200 9 1ZM6.600 15.200Q7 17.800 9 17.800t2.400-2.600" {...line("#2b2b2b", 1.4)} /></svg>
          </TraySlot>
        </Tray>
      </Taskbar>
    </Screen>
  );
}
